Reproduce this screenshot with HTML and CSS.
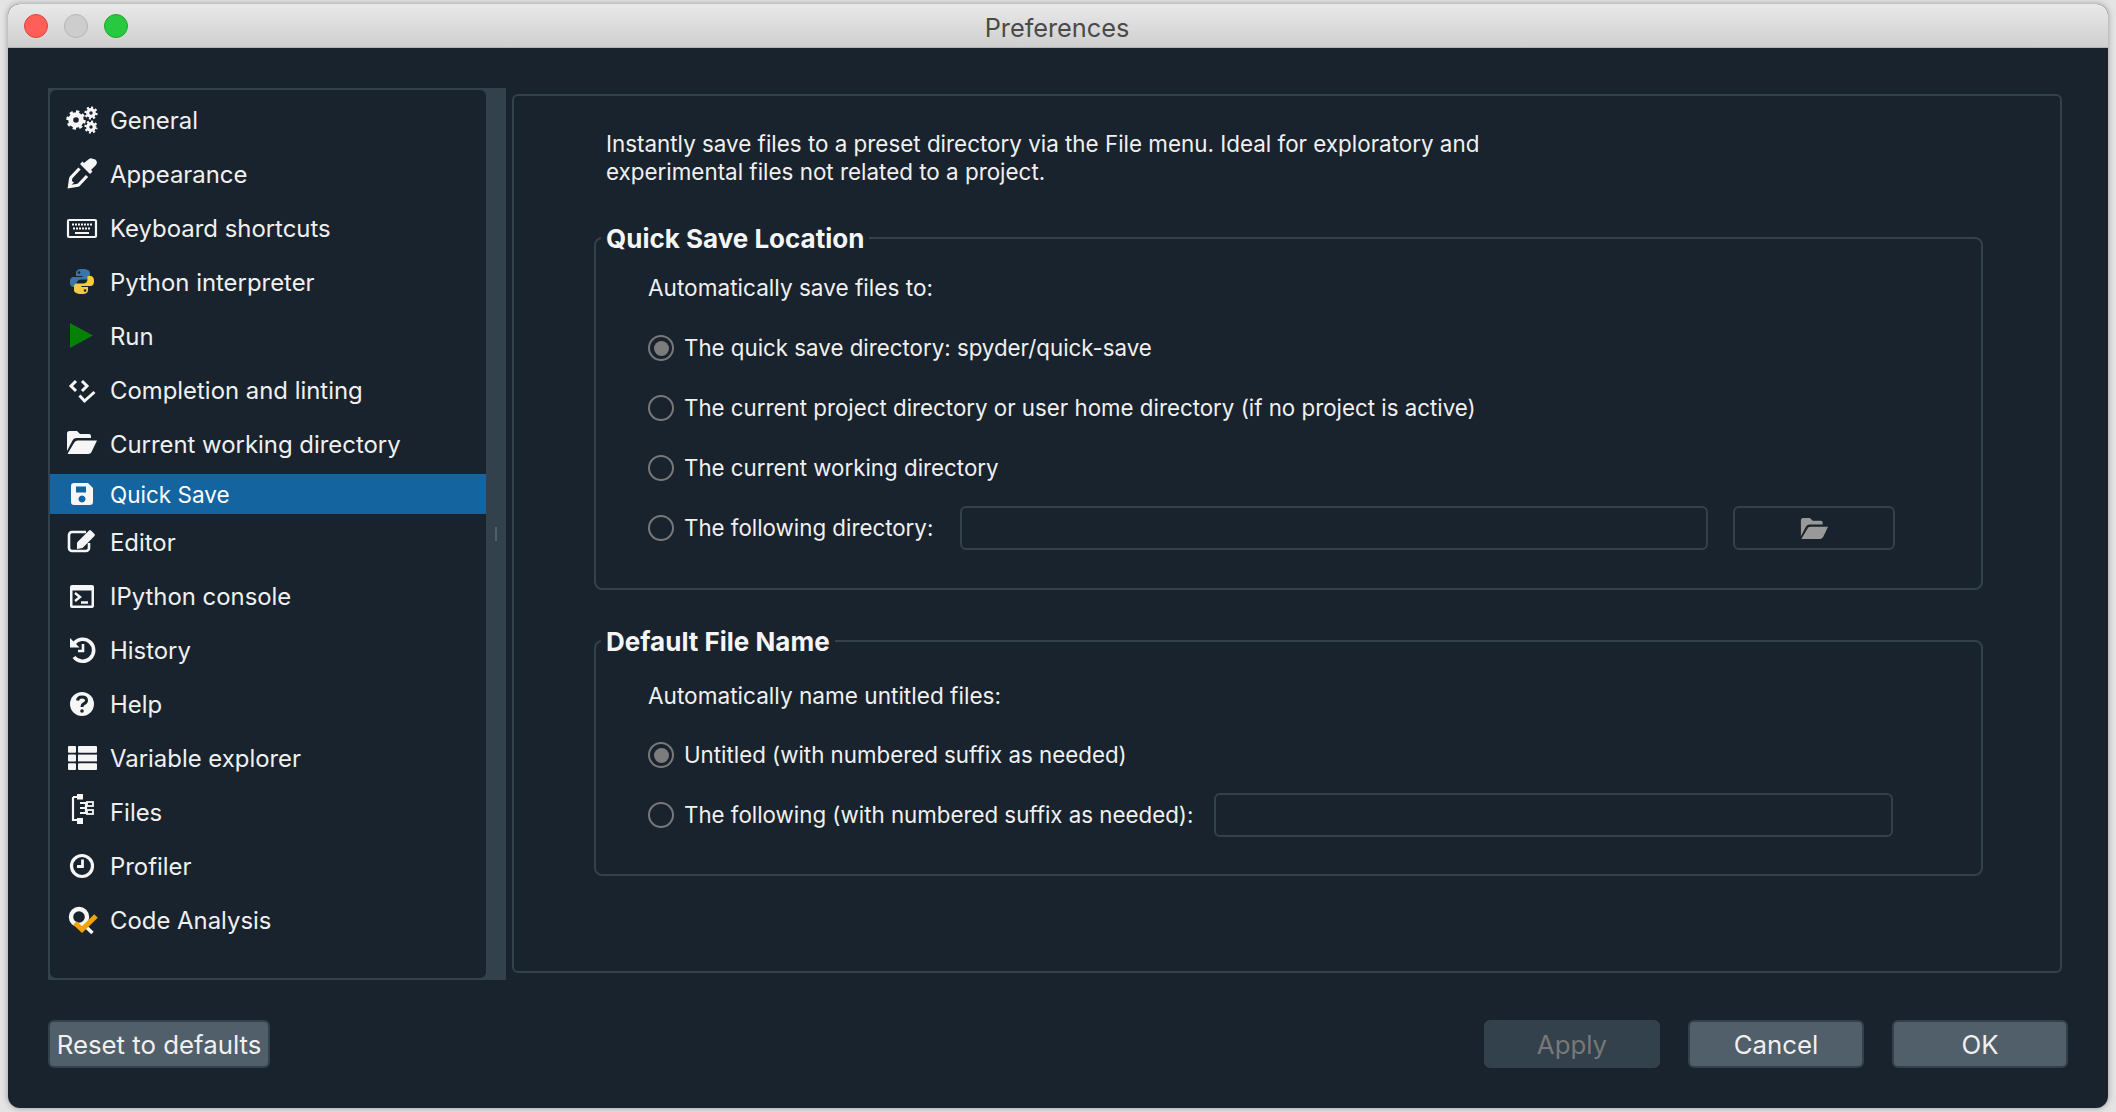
FILE: index.html
```html
<!DOCTYPE html>
<html lang="en">
<head>
<meta charset="utf-8">
<title>Preferences</title>
<link rel="stylesheet" href="styles.css">
</head>
<body>
<div class="window">
  <header class="titlebar">
    <div class="lights"><span class="light red"></span><span class="light gray"></span><span class="light green"></span></div>
    <div class="title">Preferences</div>
  </header>
  <div class="dialog">
    <div class="top">
      <aside class="sidebar">
        <ul class="list">
          <li class="row"><svg class="ico" viewBox="0 0 32 32"><g class="gear"><circle class="ring" cx="10" cy="16" r="5.3" stroke-width="5"/><circle class="teeth" cx="10" cy="16" r="8" stroke-width="3.400" pathLength="16" stroke-dasharray="1 1"/><circle class="ring" cx="25" cy="9" r="3.300" stroke-width="3.200"/><circle class="teeth" cx="25" cy="9" r="5.400" stroke-width="2.400" pathLength="16" stroke-dasharray="1 1"/><circle class="ring" cx="25" cy="23" r="3.300" stroke-width="3.200"/><circle class="teeth" cx="25" cy="23" r="5.400" stroke-width="2.400" pathLength="16" stroke-dasharray="1 1"/></g></svg>General</li>
          <li class="row"><svg class="ico" viewBox="0 0 32 32"><path d="M27 1a3.600 3.600 0 0 1 3 6l-5 5 1.500 1.500-2.500 2.500-10-10 2.500-2.500L18 5l5-4a3.500 3.500 0 0 1 4 0z"/><path class="line" stroke-width="3.200" d="M13.500 10.500 5.500 19q-1 1-1 2.500L3.500 28.500l7-1q1.500 0 2.500-1l8-8.500"/><path d="M4.500 22 8 24.500 3 29z"/></svg>Appearance</li>
          <li class="row"><svg class="ico" viewBox="0 0 32 32"><rect class="line" x="2" y="8" width="28" height="17" rx="1" stroke-width="2.200"/><path class="line" stroke-width="2.200" stroke-dasharray="2 1" d="M6 12.500h20M7 16.500h18"/><path class="line" stroke-width="2.200" d="M9 21h14"/></svg>Keyboard shortcuts</li>
          <li class="row"><svg class="ico" viewBox="0 0 32 32"><path class="py-blue" d="M16 3c-5 0-6 2-6 4v3h6.500v1H8c-3 0-4 2-4 5s1 5 4 5h2.500v-3c0-3 2-4.500 4.500-4.500h6c2 0 3-1 3-3V7c0-2-2-4-8-4z"/><path class="py-yellow" d="M16 28c5 0 6-2 6-4v-3h-6.500v-1H24c3 0 4-2 4-5s-1-5-4-5h-2.500v3c0 3-2 4.500-4.500 4.500h-6c-2 0-3 1-3 3V24c0 2 2 4 8 4z"/><circle class="py-eye" cx="13" cy="6.500" r="1.300"/><circle class="py-eye" cx="19" cy="24.500" r="1.300"/></svg>Python interpreter</li>
          <li class="row"><svg class="ico" viewBox="0 0 32 32"><polygon class="go" points="4,3 27,15.500 4,28"/></svg>Run</li>
          <li class="row"><svg class="ico" viewBox="0 0 32 32"><path class="line" stroke-width="3" d="M10 7l-5 5 5 5M16 7l5 5-5 5M13.500 21.500l5 5.500 10-9"/></svg>Completion and linting</li>
          <li class="row"><svg class="ico" viewBox="0 0 32 32"><path d="M1 23V5.500A2.500 2.500 0 0 1 3.500 3H11l3 3h9a2 2 0 0 1 2 2v2H10a4 4 0 0 0-3.500 2.500z"/><path d="M2 26q-.5 0 0-1l6-10q1-2.500 3.500-2.500H31l-5.500 11.500q-1 2-3 2z"/></svg>Current working directory</li>
          <li class="row selected"><svg class="ico" viewBox="0 0 32 32"><path fill-rule="evenodd" d="M8 5h14l5 5v14a3 3 0 0 1-3 3H8a3 3 0 0 1-3-3V8a3 3 0 0 1 3-3zM10 8.500v6h10v-6zM16 17.500a3.500 3.500 0 1 0 .01 0z"/></svg>Quick Save</li>
          <li class="row"><svg class="ico" viewBox="0 0 32 32"><path class="line" stroke-width="2.600" d="M20 6H6a3 3 0 0 0-3 3v13a3 3 0 0 0 3 3h14a3 3 0 0 0 3-3v-5"/><path d="M11 16.500 23 4.500q1-1 2 0l3.500 3.500q1 1 0 2L16.500 22 11 23z"/></svg>Editor</li>
          <li class="row"><svg class="ico" viewBox="0 0 32 32"><path fill-rule="evenodd" d="M6 5h20a2 2 0 0 1 2 2v19a2 2 0 0 1-2 2H6a2 2 0 0 1-2-2V7a2 2 0 0 1 2-2zM6.500 10.500V25.500h19V10.500z"/><path class="line" stroke-width="2.400" d="M9 13l5 4-5 4M15 22.500h7"/></svg>IPython console</li>
          <li class="row"><svg class="ico" viewBox="0 0 32 32"><path class="line" stroke-width="3.600" d="M8 9.500A11 11 0 1 1 8 23"/><polygon points="4,4 4,13.500 13.500,13.500"/><path class="line" stroke-width="2.600" d="M17 10v7h-5"/></svg>History</li>
          <li class="row"><svg class="ico" viewBox="0 0 32 32"><circle cx="16" cy="16" r="12"/><path class="cut" stroke-width="3" d="M11.500 12.500q.5-3.500 4.500-3.500 4.500 0 4.500 3.500 0 2-2.500 3.200-2 1-2 3v.3"/><circle class="dot" cx="16" cy="23" r="1.800"/></svg>Help</li>
          <li class="row"><svg class="ico" viewBox="0 0 32 32"><rect x="2" y="4" width="8" height="6.800" rx="1"/><rect x="12" y="4" width="19" height="6.800" rx="1"/><rect x="2" y="12.600" width="8" height="6.800" rx="1"/><rect x="12" y="12.600" width="19" height="6.800"/><rect x="2" y="21.200" width="8" height="6.800" rx="1"/><rect x="12" y="21.200" width="19" height="6.800" rx="1"/></svg>Variable explorer</li>
          <li class="row"><svg class="ico" viewBox="0 0 32 32"><path class="line" stroke-width="2.200" d="M7 1v23h6M7 1h6M14 7h6v10h-6M14 12h5"/><rect x="11" y="-2" width="6" height="5.500"/><rect x="11" y="22" width="6" height="6"/><rect class="hollow" x="21" y="6" width="6" height="4" stroke-width="1.800"/><rect class="hollow" x="21" y="14" width="6" height="4" stroke-width="1.800"/></svg>Files</li>
          <li class="row"><svg class="ico" viewBox="0 0 32 32"><circle class="line" cx="16" cy="16" r="10.500" stroke-width="3.200"/><path class="line" stroke-width="2.800" d="M16.500 9.500v7H11"/></svg>Profiler</li>
          <li class="row"><svg class="ico" viewBox="0 0 32 32"><circle class="line" cx="13" cy="13" r="8" stroke-width="4.400"/><path class="line" stroke-width="3.500" d="M17 20l9.500 9"/><path class="check" stroke-width="5" d="M9 19l7 6.500L30 12"/></svg>Code Analysis</li>
        </ul>
        <div class="splitter"><span class="handle"></span></div>
      </aside>
      <main class="panel">
        <p class="intro">Instantly save files to a preset directory via the File menu. Ideal for exploratory and<br>experimental files not related to a project.</p>
        <fieldset class="group">
          <legend class="legend">Quick Save Location</legend>
          <div class="group-body">
            <div class="lead">Automatically save files to:</div>
            <div class="choices">
              <div class="choice"><span class="radio on"></span>The quick save directory: spyder/quick-save</div>
              <div class="choice"><span class="radio"></span>The current project directory or user home directory (if no project is active)</div>
              <div class="choice"><span class="radio"></span>The current working directory</div>
              <div class="choice"><span class="radio"></span><span class="field-label dir">The following directory:</span><span class="field field-dir"></span>
                <span class="browse"><svg class="browse-ico" viewBox="0 0 32 24"><path d="M1 21V3.500A2.500 2.500 0 0 1 3.500 1H11l3 3h9a2 2 0 0 1 2 2v2H10a4 4 0 0 0-3.500 2.500z"/><path d="M2 24q-.5 0 0-1l6-10q1-2.500 3.500-2.500H31l-5.500 11.500q-1 2-3 2z"/></svg></span></div>
            </div>
          </div>
        </fieldset>
        <fieldset class="group second">
          <legend class="legend">Default File Name</legend>
          <div class="group-body">
            <div class="lead">Automatically name untitled files:</div>
            <div class="choices">
              <div class="choice"><span class="radio on"></span>Untitled (with numbered suffix as needed)</div>
              <div class="choice"><span class="radio"></span><span class="field-label name">The following (with numbered suffix as needed):</span><span class="field field-name"></span></div>
            </div>
          </div>
        </fieldset>
      </main>
    </div>
    <footer class="actions">
      <button class="btn reset">Reset to defaults</button>
      <div class="actions-right">
        <button class="btn wide" disabled>Apply</button>
        <button class="btn wide">Cancel</button>
        <button class="btn wide">OK</button>
      </div>
    </footer>
  </div>
</div>
</body>
</html>
```

FILE: styles.css
```css
* { box-sizing: border-box; }
html, body { margin: 0; height: 100%; }
body {
  background: #e4e4e4;
  font-family: Inter, "Noto Sans", sans-serif;
  color: #f0f0f0;
  overflow: hidden;
}
.window {
  margin: 4px 8px;
  width: 2100px;
  height: 1104px;
  border-radius: 12px;
  overflow: hidden;
  display: flex;
  flex-direction: column;
  background: #19232d;
  box-shadow: 0 0 6px rgba(0,0,0,.35);
}
.titlebar {
  height: 44px;
  flex: none;
  background: linear-gradient(#e9e9e9, #cfcfcf);
  border-bottom: 1px solid #b4b4b4;
  position: relative;
  display: flex;
  align-items: center;
  justify-content: center;
  padding: 3px 2px 0 0;
}
.lights { position: absolute; left: 16px; top: 10px; display: flex; gap: 16px; }
.light { width: 24px; height: 24px; border-radius: 50%; display: block; }
.red { background: #ff5f57; border: 1px solid #e0443e; }
.gray { background: #cdcdcd; border: 1px solid #b4b4b4; }
.green { background: #28c840; border: 1px solid #1aab29; }
.title { font-size: 25.300px; color: #4a4a4a; }

.dialog { flex: 1; display: flex; flex-direction: column; padding: 40px 41px 0 40px; }
.top { display: flex; height: 892px; flex: none; }

.sidebar {
  width: 458px;
  flex: none;
  background: #32414b;
  padding: 2px 0 2px 2px;
  display: flex;
}
.list {
  flex: 1;
  list-style: none;
  margin: 0;
  padding: 3px 0 0;
  background: #19232d;
  border-radius: 6px;
}
.splitter { width: 20px; flex: none; display: flex; align-items: center; justify-content: center; }
.handle { width: 2px; height: 14px; background: #505f69; display: block; }
.row {
  height: 54px;
  display: flex;
  align-items: center;
  gap: 12px;
  padding-left: 16px;
  font-size: 23.900px;
  white-space: nowrap;
}
.row.selected { height: 40px; margin: 3px 0 1px; background: #1464a0; color: #fff; font-size: 22.500px; }
.ico { width: 32px; height: 32px; flex: none; fill: #f6f6f6; overflow: visible; }
.ring, .teeth { fill: none; stroke: #f6f6f6; }
.line { fill: none; stroke: #f6f6f6; }
.hollow { fill: none; stroke: #f6f6f6; }
.cut { fill: none; stroke: #19232d; }
.dot { fill: #19232d; }
.check { fill: none; stroke: #f5a20a; }
.go { fill: #078007; }
.py-blue { fill: #3a75a8; }
.py-yellow { fill: #f7cb3f; }
.py-eye { fill: #19232d; }

.panel {
  width: 1550px;
  flex: none;
  margin: 6px 0 7px 6px;
  border: 2px solid #32414b;
  border-radius: 6px;
  padding: 34px 77px 0 80px;
}
.intro { margin: 0 0 35px; padding-left: 12px; font-size: 22.400px; line-height: 28px; }
.group {
  margin: 0;
  padding: 0 0 38px;
  border: 2px solid #32414b;
  border-radius: 8px;
  min-width: 0;
}
.group.second { margin-top: 34px; padding-bottom: 37px; }
.legend {
  margin-left: 5px;
  padding: 2px 5px 0;
  font-size: 26px;
  font-weight: 700;
  line-height: 32px;
  color: #f5f5f5;
}
.group-body { padding: 19px 0 0 52px; }
.second .group-body { padding-top: 24px; }
.lead { font-size: 22.600px; line-height: 28px; margin-bottom: 24px; }
.second .lead { margin-bottom: 23px; }
.choices { display: flex; flex-direction: column; gap: 16px; }
.choice { height: 44px; padding-bottom: 2px; display: flex; align-items: center; font-size: 22.300px; white-space: nowrap; }
.radio {
  width: 26px;
  height: 26px;
  margin-top: 2px;
  border: 2px solid #787878;
  border-radius: 50%;
  flex: none;
  margin-right: 10px;
  display: flex;
  align-items: center;
  justify-content: center;
}
.radio.on::after { content: ""; width: 15px; height: 15px; border-radius: 50%; background: #7c7c7c; }
.field { height: 44px; margin-top: 2px; border: 2px solid #32414b; border-radius: 6px; display: block; flex: none; }
.field-label.dir { width: 276px; }
.field-dir { width: 748px; }
.field-label.name { width: 530px; }
.field-name { width: 679px; }
.browse {
  width: 162px;
  height: 44px;
  margin: 2px 0 0 25px;
  border: 2px solid #32414b;
  border-radius: 6px;
  display: flex;
  align-items: center;
  justify-content: center;
  flex: none;
}
.browse-ico { width: 29px; height: 22px; fill: #999; }

.actions { margin-top: 40px; display: flex; justify-content: space-between; margin-right: -1px; }
.actions-right { display: flex; gap: 28px; }
.btn {
  height: 48px;
  border: 2px solid #32414b;
  border-radius: 6px;
  background: #505f69;
  color: #f0f0f0;
  font: 400 25.800px Inter, "Noto Sans", sans-serif;
  padding: 0;
}
.btn.reset { width: 222px; }
.btn.wide { width: 176px; }
.btn:disabled { background: #32414b; color: #787878; }
```
